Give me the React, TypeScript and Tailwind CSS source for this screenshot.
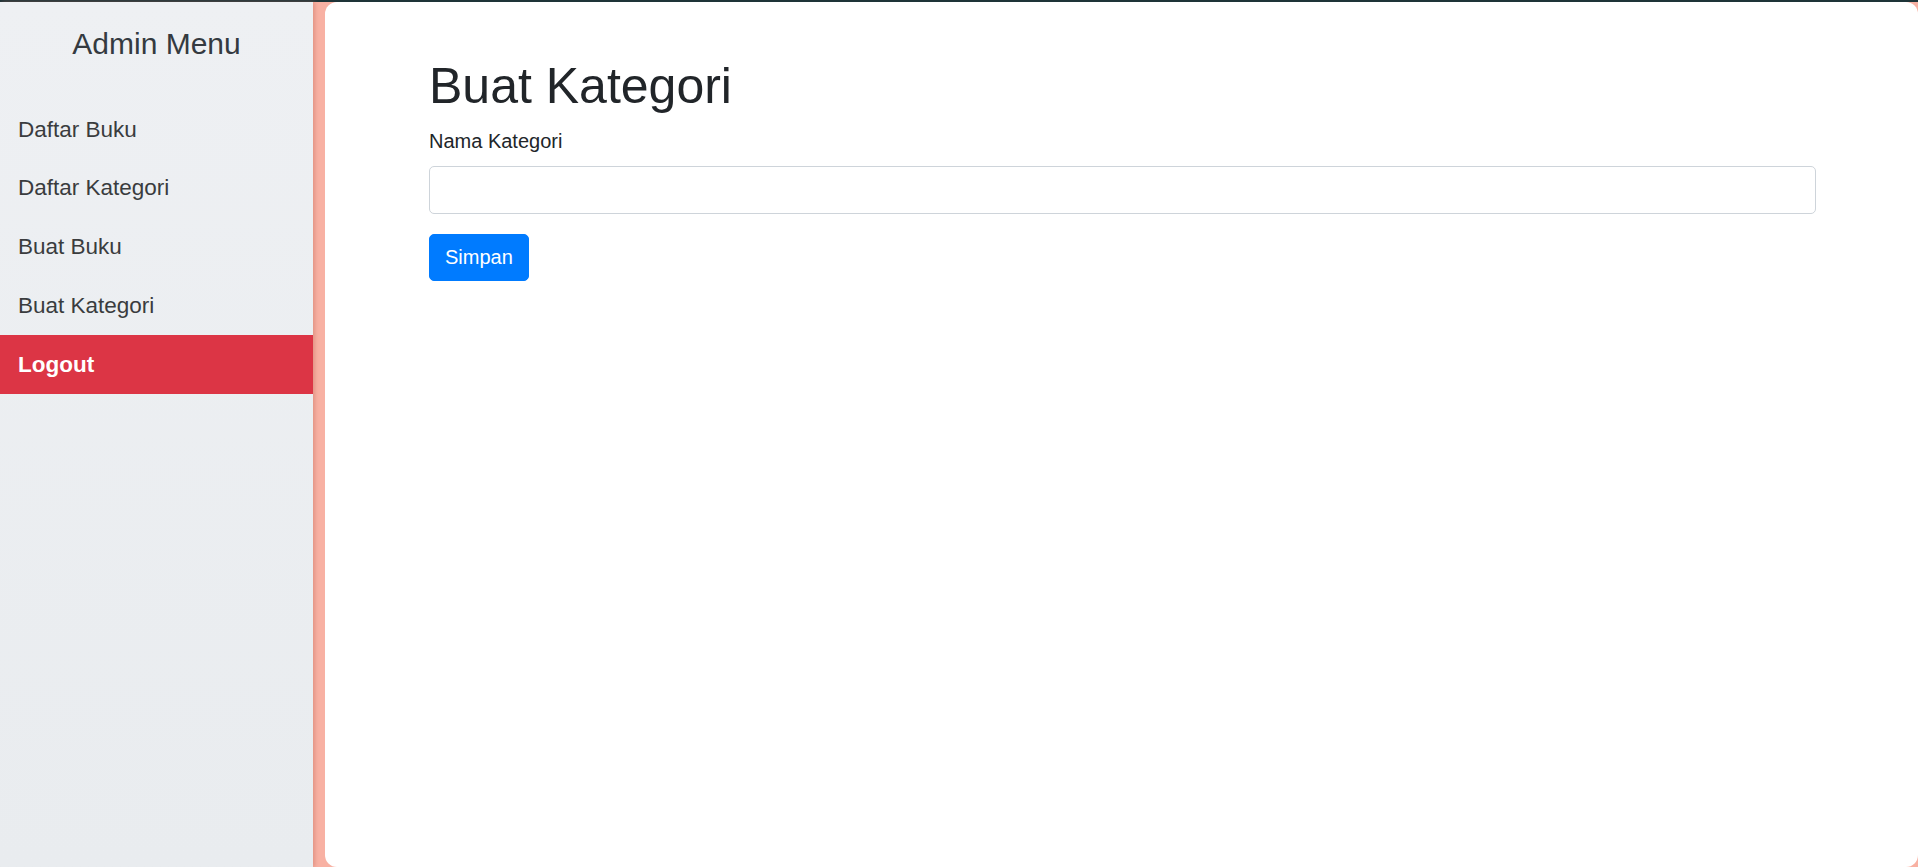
import React from "react";

export default function App() {
  const items = ["Daftar Buku", "Daftar Kategori", "Buat Buku", "Buat Kategori"];
  return (
    <div
      className="w-full h-[867px] overflow-hidden flex flex-col bg-[#f8b1a3]"
      style={{ fontFamily: '"Liberation Sans", Arial, sans-serif' }}
    >
      <div className="h-[2px] w-full bg-[#1e3438] shrink-0" />
      <div className="flex flex-1 min-h-0">
        <aside className="w-[313px] shrink-0 bg-gradient-to-b from-[#eef0f3] to-[#e9ecef] shadow-[2px_0_4px_rgba(200,110,95,0.45)] z-10 flex flex-col">
          <h4 className="text-[30px] leading-[36px] text-[#343a40] text-center mt-[24px] mb-[38px]">
            Admin Menu
          </h4>
          <nav className="flex flex-col">
            {items.map((t) => (
              <a
                key={t}
                className="block px-[18px] py-[12.5px] text-[22.5px] leading-[33.75px] text-[#3a3c3e]"
              >
                {t}
              </a>
            ))}
            <a className="block px-[18px] py-[12.5px] text-[22.5px] leading-[33.75px] text-white font-bold bg-[#dc3545]">
              Logout
            </a>
          </nav>
        </aside>
        <div className="w-[12px] shrink-0" />
        <main className="flex-1 bg-white rounded-[12px] pl-[104px] pr-[102px] pt-[54px]">
          <h1 className="text-[50px] leading-[60px] text-[#212529] mb-[10px]">Buat Kategori</h1>
          <label className="block text-[20px] leading-[30px] text-[#212529] mb-[10px]">
            Nama Kategori
          </label>
          <input
            type="text"
            className="block w-full h-[47.5px] border border-[#ced4da] rounded-[5px] px-[15px] text-[20px] outline-none mb-[20px]"
          />
          <button className="bg-[#007bff] text-white text-[20px] leading-[30px] px-[15px] py-[7.5px] rounded-[5px] border border-[#007bff]">
            Simpan
          </button>
        </main>
      </div>
    </div>
  );
}
